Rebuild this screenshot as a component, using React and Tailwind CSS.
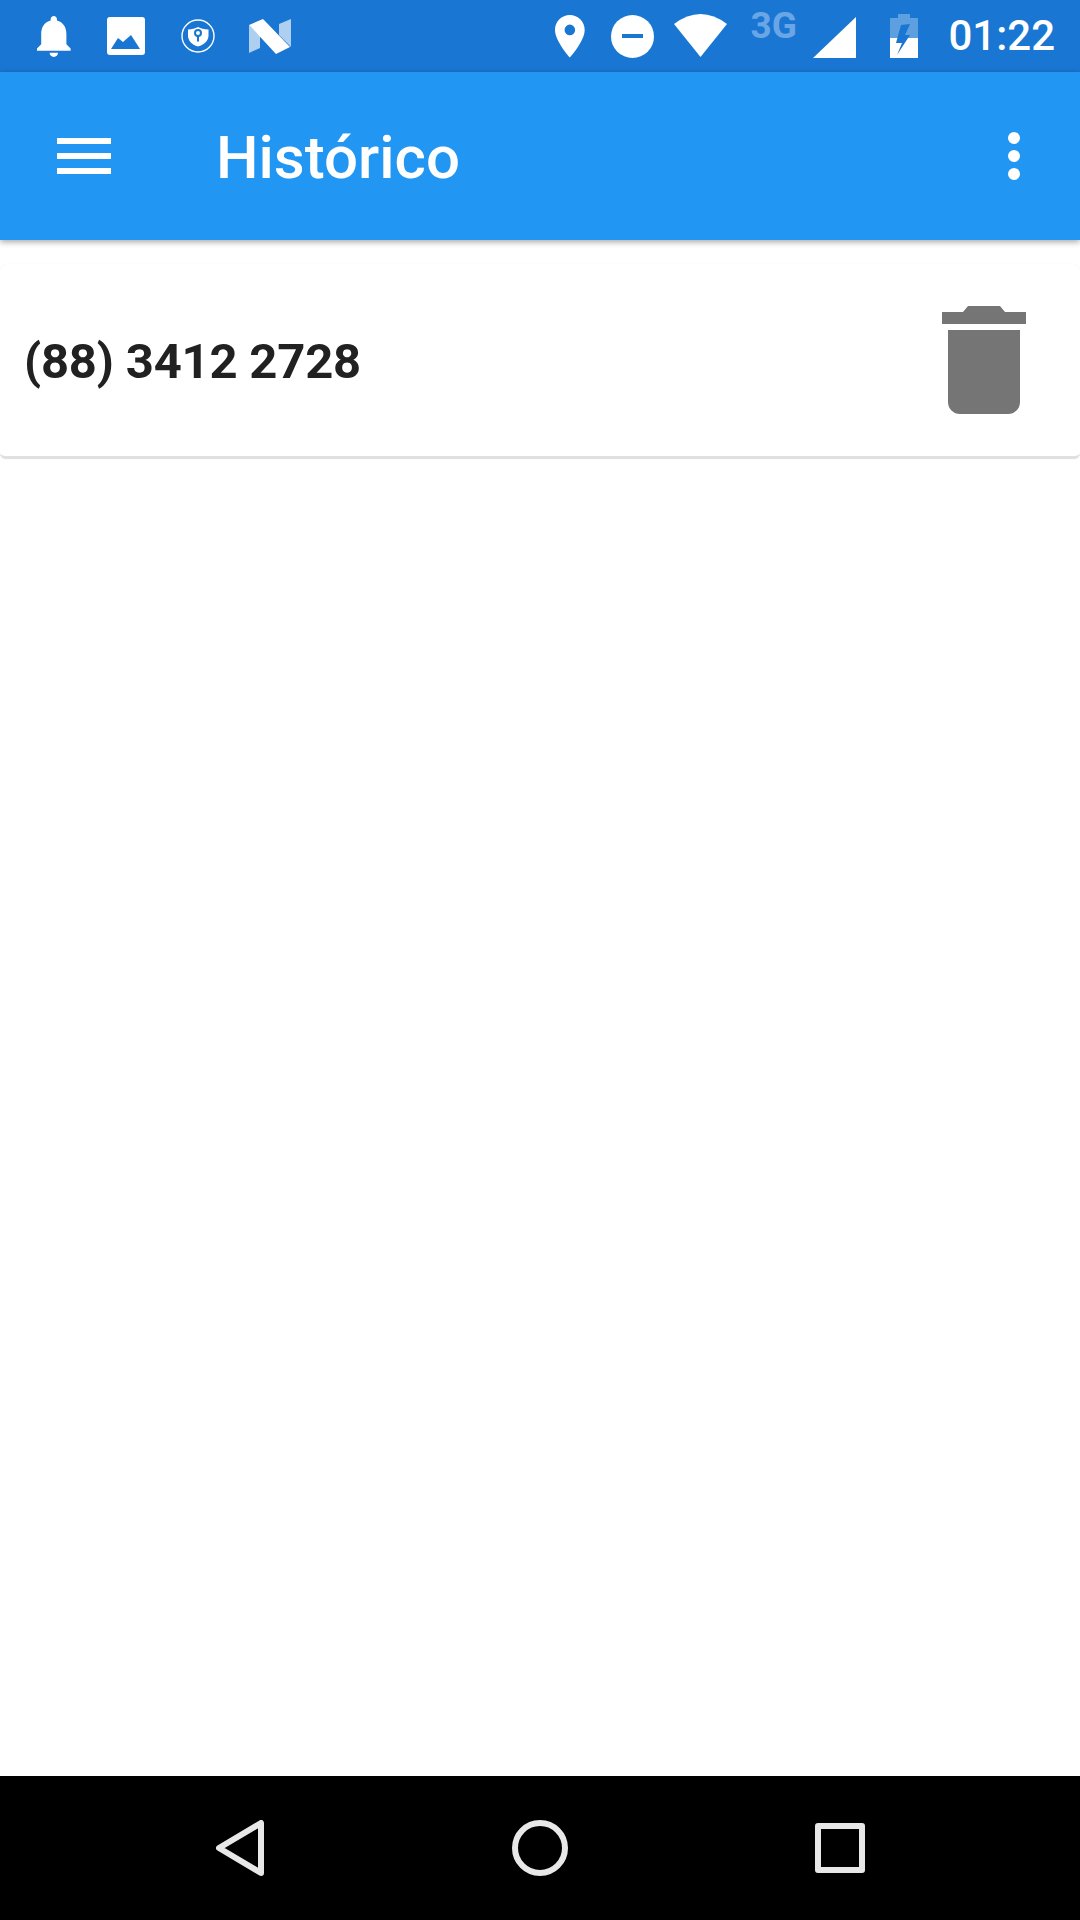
import React from "react";

// every status icon is drawn in a 72px tall box, so y values are the bar's own
const StatusIcon = ({ x, width, children }) => (
  <svg width={width} height={72} viewBox={`${x} 0 ${width} 72`} fill="white" className="block shrink-0">
    {children}
  </svg>
);

const StatusBar = () => (
  <div className="flex h-[72px] shrink-0 items-start bg-[#1976D2] pl-[37px]">
    <StatusIcon x={37} width={34}>
      <path
        transform="translate(28.6 10.75) scale(2.1)"
        d="M12 22c1.1 0 2-.9 2-2h-4c0 1.1.89 2 2 2zm6-6v-5c0-3.07-1.64-5.64-4.5-6.32V4c0-.83-.67-1.5-1.5-1.5s-1.5.67-1.5 1.5v.68C7.63 5.36 6 7.92 6 11v5l-2 2v1h16v-1l-2-2z"
      />
    </StatusIcon>
    <div className="ml-[36px]">
      <StatusIcon x={107} width={38}>
        <rect x={107} y={17} width={38} height={38} rx={3} />
        <path d="M111 49l7-11 5 4 8-7 9 14z" fill="#1976D2" />
      </StatusIcon>
    </div>
    <div className="ml-[36px]">
      <StatusIcon x={181} width={34}>
        <circle cx={198} cy={36} r={16} fill="none" stroke="white" strokeWidth={1.4} />
        <path d="M188 29.5c4 0 7-1 10-2.500 3 1.500 6 2.500 10.500 2.500v6c0 5-4 9-10.500 11-6.500-2-10-6-10-11z" />
        <circle cx={198} cy={33} r={3} fill="none" stroke="#1976D2" strokeWidth={2} />
        <rect x={197} y={35.500} width={2} height={6} fill="#1976D2" />
      </StatusIcon>
    </div>
    <div className="ml-[33px]">
      <StatusIcon x={248} width={44}>
        <path d="M249 25v28l11-5V36z" fillOpacity={0.65} />
        <path d="M279 24l12-5v28l-12-12z" fillOpacity={0.65} />
        <path d="M249 25l14-6 27 28-14 7z" />
      </StatusIcon>
    </div>

    <div className="ml-auto">
      <StatusIcon x={555} width={30}>
        <path
          fillRule="evenodd"
          transform="translate(544.400 10.800) scale(2.120)"
          d="M12 2C8.130 2 5 5.130 5 9c0 5.250 7 13 7 13s7-7.750 7-13c0-3.870-3.130-7-7-7zm0 9.500a2.500 2.500 0 0 1 0-5 2.500 2.500 0 0 1 0 5z"
        />
      </StatusIcon>
    </div>
    <div className="ml-[26px]">
      <StatusIcon x={611} width={43}>
        <circle cx={632.500} cy={36.500} r={21.500} />
        <rect x={622} y={34} width={21} height={4} fill="#1976D2" />
      </StatusIcon>
    </div>
    <div className="ml-[20px]">
      <StatusIcon x={674} width={53}>
        <path d="M700.500 57L674 24Q700.500 4 727 24Z" />
      </StatusIcon>
    </div>
    <span className="ml-[23px] mt-[7px] w-[48px] font-['Roboto',sans-serif] text-[37px] leading-[38px] font-bold text-[#6AA6E6]">
      3G
    </span>
    <div className="ml-[15px]">
      <StatusIcon x={813} width={43}>
        <path d="M856 17v41h-43z" />
      </StatusIcon>
    </div>
    <div className="ml-[34px]">
      <StatusIcon x={890} width={28}>
        <path d="M890 38V18h8v-4h12v4h8v20z" fillOpacity={0.3} />
        <rect x={890} y={38} width={28} height={20} />
        <path d="M910 24l-9 1-5 18h6l-5 12 13-20h-5z" fill="#1976D2" />
      </StatusIcon>
    </div>
    <span className="ml-[30px] mr-[25px] font-['Roboto',sans-serif] text-[42px] leading-[72px] font-medium text-white">
      01:22
    </span>
  </div>
);

const AppBar = () => (
  <div className="relative z-10 flex h-[168px] shrink-0 items-center bg-[#2196F3] pl-[57px] shadow-[0_2px_6px_rgba(0,0,0,0.35)]">
    <svg width={54} height={36} viewBox="0 0 54 36" fill="white" className="block">
      <rect y={0} width={54} height={6} />
      <rect y={15} width={54} height={6} />
      <rect y={30} width={54} height={6} />
    </svg>
    <span className="ml-[105px] pt-[4px] font-['Roboto',sans-serif] text-[60px] leading-none font-medium text-white">
      Histórico
    </span>
    <svg width={12} height={48} viewBox="0 0 12 48" fill="white" className="ml-auto mr-[60px] mt-[-1px] block">
      <circle cx={6} cy={6} r={6} />
      <circle cx={6} cy={24} r={6} />
      <circle cx={6} cy={42} r={6} />
    </svg>
  </div>
);

const HistoryCard = ({ phone }) => (
  <div className="flex h-[195px] items-center rounded-[6px] border-b-[3px] border-[#E0E0E0] bg-white pl-[24px] pr-[54px] shadow-[0_0_1px_rgba(0,0,0,0.1)]">
    <span className="pt-[2px] font-['Roboto',sans-serif] text-[49px] leading-none font-bold tracking-[-0.2px] text-[#212121]">
      {phone}
    </span>
    <svg width={84} height={108} viewBox="942 306 84 108" fill="#757575" className="ml-auto mt-[-1px] block">
      <path d="M942 312h21l5-6h32l5 6h21v12h-84z" />
      <path d="M948 330h72v72a12 12 0 0 1-12 12h-48a12 12 0 0 1-12-12z" />
    </svg>
  </div>
);

const NavBar = () => (
  <div className="flex h-[144px] shrink-0 items-center justify-center gap-[247px] bg-black pl-[1px]">
    <svg width={48} height={56} viewBox="0 0 48 56" fill="none" stroke="#E8E8E8" strokeWidth={6} strokeLinejoin="round" className="mr-[1px] block">
      <path d="M45 3v50L3 28z" />
    </svg>
    <svg width={56} height={56} viewBox="0 0 56 56" fill="none" stroke="#E8E8E8" strokeWidth={6} className="block">
      <circle cx={28} cy={28} r={25} />
    </svg>
    <svg width={50} height={50} viewBox="0 0 50 50" fill="none" stroke="#E8E8E8" strokeWidth={6} strokeLinejoin="round" className="block">
      <rect x={3} y={3} width={44} height={44} />
    </svg>
  </div>
);

const App = () => {
  return (
    <div className="flex h-[1920px] w-[1080px] flex-col overflow-hidden bg-white">
      <StatusBar />
      <AppBar />
      <div className="flex-1 pt-[24px]">
        <HistoryCard phone="(88) 3412 2728" />
      </div>
      <NavBar />
    </div>
  );
};

export default App;
